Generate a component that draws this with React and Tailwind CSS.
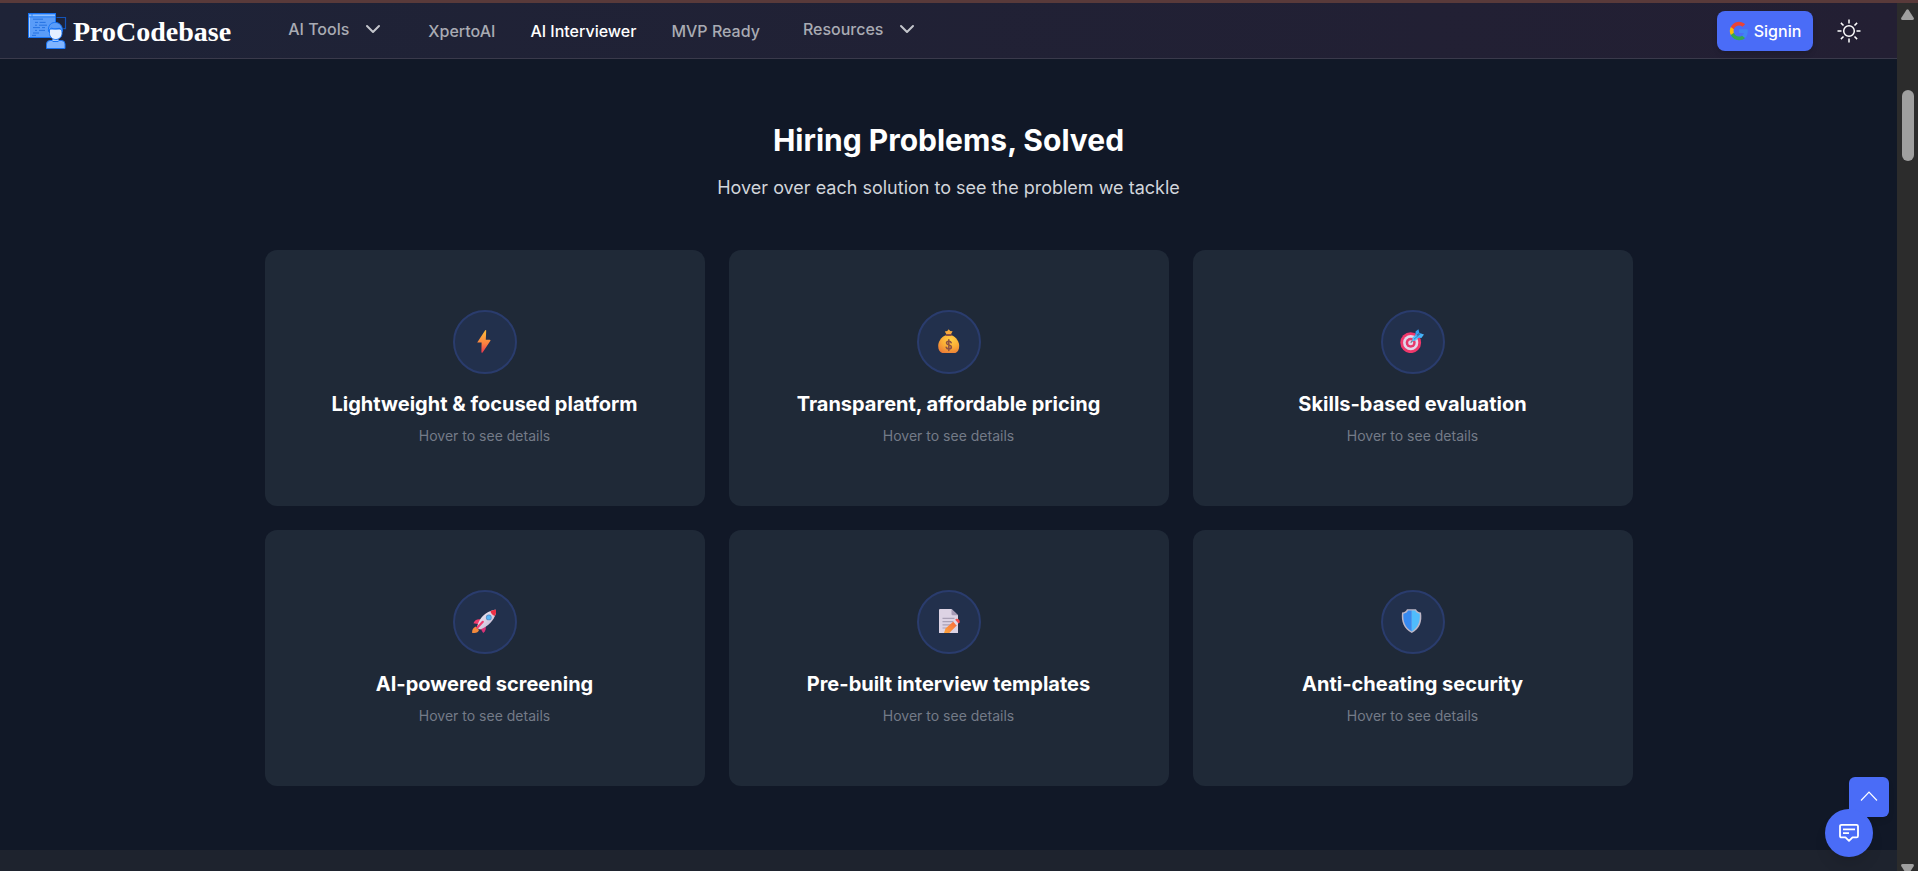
import React from "react";
import { ChevronDown } from "lucide-react";

const BoltIcon = () => (
    <svg width="24" height="24" viewBox="0 0 24 24" aria-hidden="true">
        <defs>
            <linearGradient id="bolt" x1="0" y1="0" x2="0" y2="1">
                <stop offset="0.1" stopColor="#fcb53b" />
                <stop offset="0.6" stopColor="#fd8140" />
                <stop offset="1" stopColor="#e8364f" />
            </linearGradient>
        </defs>
        <path d="M13.2 1.2 5.2 13.6H9.6L9.4 23.2Q9.8 24.2 10.8 23.2L18.4 11.8Q18.8 10.8 17.6 10.8H13.8L14.2 1.6Q14 .6 13.2 1.2Z" fill="url(#bolt)" />
    </svg>
);

const MoneyIcon = () => (
    <svg width="24" height="24" viewBox="-1 0 24 24" aria-hidden="true">
        <defs>
            <radialGradient id="bag" cx="0.6" cy="0.25" r="0.85">
                <stop offset="0" stopColor="#ffd044" />
                <stop offset="0.5" stopColor="#fbad36" />
                <stop offset="1" stopColor="#ea7838" />
            </radialGradient>
        </defs>
        <path d="M9.4 5.2 7.8 2.5 10.2 2 11.7.2 13.2 2l2.4.3-1.6 2.9Z" fill="#f7a83b" />
        <path d="M8.8 6.2C4 8 1.2 12.5 1.2 17c0 3.5 1.4 6 4 7h13.2c2.4-1 3.8-3.5 3.8-7 0-4.5-3-9-7.6-10.8Z" fill="url(#bag)" />
        <rect x="8.6" y="5" width="6.2" height="2" rx="1" fill="#8a5045" />
        <path d="M14.2 13.8c-.3-1-1.2-1.5-2.4-1.5-1.4 0-2.3.7-2.3 1.8 0 2.6 4.9 1.2 4.9 4 0 1.2-1 1.9-2.5 1.9-1.4 0-2.4-.6-2.7-1.7M11.8 10.8v10.8" fill="none" stroke="#8a5045" strokeWidth="1.5" strokeLinecap="round" />
    </svg>
);

const TargetIcon = () => (
    <svg width="24" height="24" viewBox="0 0 24 24" aria-hidden="true">
        <circle cx="10.7" cy="13.7" r="10.4" fill="#f0386b" />
        <circle cx="10.7" cy="13.7" r="7.6" fill="#e2d6ea" />
        <circle cx="10.7" cy="13.7" r="5" fill="#e8386c" />
        <circle cx="10.7" cy="13.7" r="2.5" fill="#e2d6ea" />
        <path d="m10.7 13.7 8-8" stroke="#6f7485" strokeWidth="1.2" />
        <path d="m12.2 12.2.4-3.6 3-3.2L19 8.2l-3.2 3.2Z" fill="#57c2f8" />
        <path d="m15.4 7.2.2-4.6L18.4.2l1 3.9Z" fill="#359ff2" />
        <path d="m16.6 8.4 3-4.3L24 5.6l-2.6 3.3Z" fill="#46b2f6" />
        <path d="m14 10.2 7-6" stroke="#2678ca" strokeWidth=".9" />
    </svg>
);

const RocketIcon = () => (
    <svg width="24" height="24" viewBox="0 0 24 24" aria-hidden="true">
        <defs>
            <linearGradient id="hull" x1="0" y1="0" x2="1" y2="1">
                <stop offset="0" stopColor="#f7f0f8" />
                <stop offset="1" stopColor="#bdb2ce" />
            </linearGradient>
        </defs>
        <path d="M3.8 17.5 7 21c-.6 2-2.2 3-4.6 3H.2c-.4-2.8.7-5.4 3.6-6.5Z" fill="#f48a3c" />
        <path d="M1.4 14.3c1-3 3.6-4.6 7.4-4l-1.4 5Z" fill="#f23d6f" />
        <path d="m8.6 19.8 4.5-4.4c1.5 3.4.8 6.6-1.9 8.6Z" fill="#d93276" />
        <path d="M5.1 17.5C7.4 9.5 13 2.5 22.8.8c1.3-.2 1.8.5 1.5 1.8C22.6 11 16.5 17.2 8.2 20.4c-1.8-.2-3-1.4-3.1-2.9Z" fill="url(#hull)" />
        <path d="M18.4 2.2C20 1.3 22.7.2 24 .8c.8 1.3 0 4-1.2 6.1-2-.5-4-2.5-4.4-4.7Z" fill="#ed3045" />
        <circle cx="16.8" cy="8.4" r="2.9" fill="#5b91c8" />
        <circle cx="16.8" cy="8.4" r="2" fill="#56b6f7" />
        <path d="m5.2 18.8 5.6-6" stroke="#f23d6f" strokeWidth="2.2" strokeLinecap="round" />
    </svg>
);

const MemoIcon = () => (
    <svg width="24" height="24" viewBox="-1 0 24 24" aria-hidden="true">
        <defs>
            <linearGradient id="pencil" x1="1" y1="0" x2="0" y2="1">
                <stop offset="0" stopColor="#f9653c" />
                <stop offset="1" stopColor="#fda63d" />
            </linearGradient>
        </defs>
        <path d="M2 1Q2 0 3 0h11.5L21 6.2V24H2Z" fill="#ddd3e4" />
        <path d="M14.5 0 21 6.2h-5.3q-1.2 0-1.2-1.2Z" fill="#a89bb6" />
        <path d="M5.5 9.4h12M5.5 12.6h12M5.5 15.8h9M5.5 19h6" stroke="#aaa1b6" strokeWidth="1.2" />
        <path d="m7 24 1.5-4.4 8.2-7.4 3.5 3.7L12.3 24Z" fill="url(#pencil)" />
        <path d="m16.1 12.5 1.8-1.6 3.4 3.8-1.8 1.7Z" fill="#e4d9e6" />
        <path d="m18.2 10.7.8-.6c1.6-1 4.4 1.3 3.6 3.2l-1.1 1.1Z" fill="#f44c47" />
    </svg>
);

const ShieldIcon = () => (
    <svg width="24" height="24" viewBox="0 0 24 24" aria-hidden="true">
        <path d="M7 .2h9c.8 2 2.4 3 5 3.3C22.4 12.5 20 19.600 11.800 24 3.600 19.600 1 12.500 2 3.500 4.600 3.200 6.200 2.200 7 .2Z" fill="#bdb6c6" />
        <path d="M11.800 1.600H8C7.200 3.400 5.700 4.400 3.400 4.800 2.900 12 4.800 18.400 11.800 22.400Z" fill="#378af0" />
        <path d="M11.800 1.600H15.200C16 3.400 17.500 4.400 19.700 4.800 20.300 12 18.500 18.400 11.800 22.400Z" fill="#50bcfc" />
    </svg>
);

const LogoMark = () => (
    <svg width="40" height="36" viewBox="0 0 40 36" aria-hidden="true">
        <path d="M28.5 4.5h9v11.2l-2.2 0" fill="none" stroke="#1454b8" strokeWidth="1.2" />
        <rect x=".5" y=".5" width="27" height="24" fill="#5a9cf8" stroke="#1673f5" />
        <path d="M1 2.6h26" stroke="#8fc0ff" strokeWidth="1.6" />
        <path d="M1.5 3.5V24" stroke="#a7cdff" />
        <path d="M4 1v2.4M1 3.9h26" stroke="#1673f5" strokeWidth=".8" />
        <path d="M5 6.2h10M7 9.4h3m1.6 0h6M7 12.2h2m2 0h8M5 14.6h7m2 0h3M7 17.4h2m2 0h6M5 20h6M4 22.4h4" stroke="#1f6ee0" strokeWidth=".9" />
        <path d="M18.5 35.5V31q0-3.5 3.5-3.5h11.500q3.500 0 3.500 3.500v4.500Z" fill="#7fb4ff" stroke="#1673f5" />
        <path d="M24.5 24h6v4.500h-6Z" fill="#a7cdff" />
        <path d="M24.5 28.5h6" stroke="#1673f5" />
        <path d="M21.5 16h12.500v4.500c0 3.500-3 6-6.200 6s-6.300-2.500-6.300-6Z" fill="#e4efff" stroke="#1673f5" />
        <path d="M20.5 18.5c-.6-5 1.6-8.9 6.2-9 5-.4 8.3 3.800 7.700 9-.7-1.600-1.800-2.700-3.200-3.200-3 .8-5.700.6-7.700-.1-1.600.5-2.300 1.700-3 3.300Z" fill="#5a9cf8" stroke="#1673f5" />
    </svg>
);

const GoogleIcon = () => (
    <svg width="20" height="20" viewBox="0 0 24 24" aria-hidden="true">
        <path d="M22.56 12.25c0-.78-.07-1.53-.2-2.25H12v4.26h5.92a5.06 5.06 0 0 1-2.2 3.32v2.77h3.57c2.08-1.92 3.27-4.74 3.27-8.1Z" fill="#4285f4" />
        <path d="M12 23c2.97 0 5.46-.98 7.28-2.66l-3.57-2.77c-.98.66-2.23 1.06-3.71 1.06-2.86 0-5.29-1.93-6.16-4.53H2.18v2.84A11 11 0 0 0 12 23Z" fill="#34a853" />
        <path d="M5.84 14.09a6.6 6.6 0 0 1 0-4.18V7.07H2.18a11 11 0 0 0 0 9.86Z" fill="#fbbc05" />
        <path d="M12 5.38c1.62 0 3.06.56 4.21 1.64l3.15-3.15A11 11 0 0 0 2.18 7.07l3.66 2.84C6.71 7.31 9.14 5.38 12 5.38Z" fill="#ea4335" />
    </svg>
);

const SunIcon = () => (
    <svg width="24" height="24" viewBox="0 0 24 24" fill="none" stroke="#fff" strokeWidth="1.5" aria-hidden="true">
        <circle cx="12" cy="12" r="5.3" />
        <path d="M12 .5v4M12 19.5v4M.5 12h4M19.5 12h4M3.9 3.9l2.6 2.6M17.5 17.5l2.6 2.6M3.9 20.1l2.6-2.6M17.5 6.5l2.6-2.6" />
    </svg>
);

const solutions = [
    { title: "Lightweight & focused platform", Icon: BoltIcon },
    { title: "Transparent, affordable pricing", Icon: MoneyIcon },
    { title: "Skills-based evaluation", Icon: TargetIcon },
    { title: "AI-powered screening", Icon: RocketIcon },
    { title: "Pre-built interview templates", Icon: MemoIcon },
    { title: "Anti-cheating security", Icon: ShieldIcon },
];

const NavDropdown = ({ label, className }) => (
    <button type="button" aria-haspopup="menu" className={`flex items-center gap-3 pb-1 text-[#a9abb3] ${className}`}>
        {label}
        <ChevronDown className="h-6 w-6 text-[#c4c6cc]" strokeWidth={2} />
    </button>
);

const Header = () => (
    <header className="flex h-14 items-center justify-between border-b border-[#3a3a4b] bg-linear-to-r from-[#1e2337] to-[#231f33] pr-9 pl-7">
        <div className="flex items-center">
            <a href="#home" className="mr-[57px] flex items-center gap-[5px] font-['Liberation_Serif',serif] text-[28px] leading-9 font-bold text-white">
                <LogoMark />
                <span className="pt-0.5">ProCodebase</span>
            </a>
            <nav className="flex items-center gap-[35px] font-medium">
                <NavDropdown label="AI Tools" className="mr-2" />
                <a href="#xperto" className="text-[#a9abb3]">XpertoAI</a>
                <a href="#interviewer" className="text-white">AI Interviewer</a>
                <a href="#mvp" className="text-[#a9abb3]">MVP Ready</a>
                <NavDropdown label="Resources" className="ml-2" />
            </nav>
        </div>
        <div className="flex items-center gap-6">
            <button type="button" className="flex h-10 w-24 items-center justify-center gap-[5px] rounded-lg bg-[#4a6cf7] font-medium text-white shadow-md">
                <GoogleIcon />
                Signin
            </button>
            <button type="button" aria-label="Toggle theme">
                <SunIcon />
            </button>
        </div>
    </header>
);

const SolutionCard = ({ title, Icon }) => (
    <article className="flex h-64 flex-col items-center justify-center rounded-xl bg-[#1f2937] text-center">
        <div className="mb-4 flex h-16 w-16 items-center justify-center rounded-full border-2 border-[#2a3c6d] bg-[#22304c] pr-0.5 pb-0.5">
            <Icon />
        </div>
        <h3 className="mb-2 text-xl font-bold text-white">{title}</h3>
        <p className="text-sm text-[#747b88]">Hover to see details</p>
    </article>
);

const ScrollTrack = () => (
    <div className="flex w-[21px] shrink-0 flex-col items-center bg-[#2c2c2c] pt-1.5" aria-hidden="true">
        <svg width="13" height="11" viewBox="0 0 13 11">
            <path d="M5.5.8q1-1 2 0L12.8 9q.4 2-1.4 2H1.6Q-.2 11 .2 9Z" fill="#9f9f9f" />
        </svg>
        <div className="mt-[70px] h-[71px] w-3 rounded-full bg-[#9f9f9f]" />
        <svg className="mt-auto" width="13" height="7" viewBox="0 0 13 7">
            <path d="M1.6 0h9.8q1.8 0 1.4 2L9.6 7H3.4L.2 2Q-.2 0 1.6 0Z" fill="#9f9f9f" />
        </svg>
    </div>
);

export default function App() {
    return (
        <div className="flex h-screen flex-col overflow-hidden border-t-3 border-[#593a3a] bg-[#111827] font-[Inter,sans-serif] text-base">
            <div className="flex min-h-0 flex-1">
                <div className="flex min-w-0 flex-1 flex-col">
                    <Header />
                    <main className="flex min-h-0 flex-1 flex-col">
                        <section className="pt-[63px] pb-16">
                            <div className="mx-auto max-w-[1400px] px-4">
                                <div className="mb-12 text-center">
                                    <h2 className="mb-4 text-3xl font-bold text-white">Hiring Problems, Solved</h2>
                                    <p className="text-lg text-[#d1d5db]">Hover over each solution to see the problem we tackle</p>
                                </div>
                                <div className="grid grid-cols-3 gap-6">
                                    {solutions.map(({ title, Icon }) => (
                                        <SolutionCard key={title} title={title} Icon={Icon} />
                                    ))}
                                </div>
                            </div>
                        </section>
                        <div className="flex-1 bg-[#1e232e]" />
                    </main>
                </div>
                <ScrollTrack />
            </div>

            {/* Floating actions */}
            <button
                type="button"
                aria-label="Back to top"
                className="fixed right-[29px] bottom-[54px] flex h-10 w-10 items-center justify-center rounded-md bg-[#4a6cf7] pb-0.5 shadow-md"
            >
                <svg width="18" height="10" viewBox="0 0 18 10" fill="none" stroke="#fff" strokeWidth="1.2" aria-hidden="true">
                    <path d="M1 9.5 9 1.2l8 8.3" />
                </svg>
            </button>
            <button
                type="button"
                aria-label="Open chat"
                className="fixed right-[45px] bottom-3.5 flex h-12 w-12 items-center justify-center rounded-full bg-[#4a6cf7] shadow-lg"
            >
                <svg width="20" height="20" viewBox="0 0 20 20" fill="none" stroke="#fff" strokeWidth="1.8" strokeLinejoin="round" aria-hidden="true">
                    <path d="M2.5 1.8h15q1.5 0 1.5 1.5v9.6q0 1.5-1.5 1.5h-4L10 17.9l-3.5-3.5h-4Q1 14.4 1 12.9V3.3Q1 1.8 2.5 1.8Z" />
                    <path d="M4 6.4h12M4 10.2h6" />
                </svg>
            </button>
        </div>
    );
}
